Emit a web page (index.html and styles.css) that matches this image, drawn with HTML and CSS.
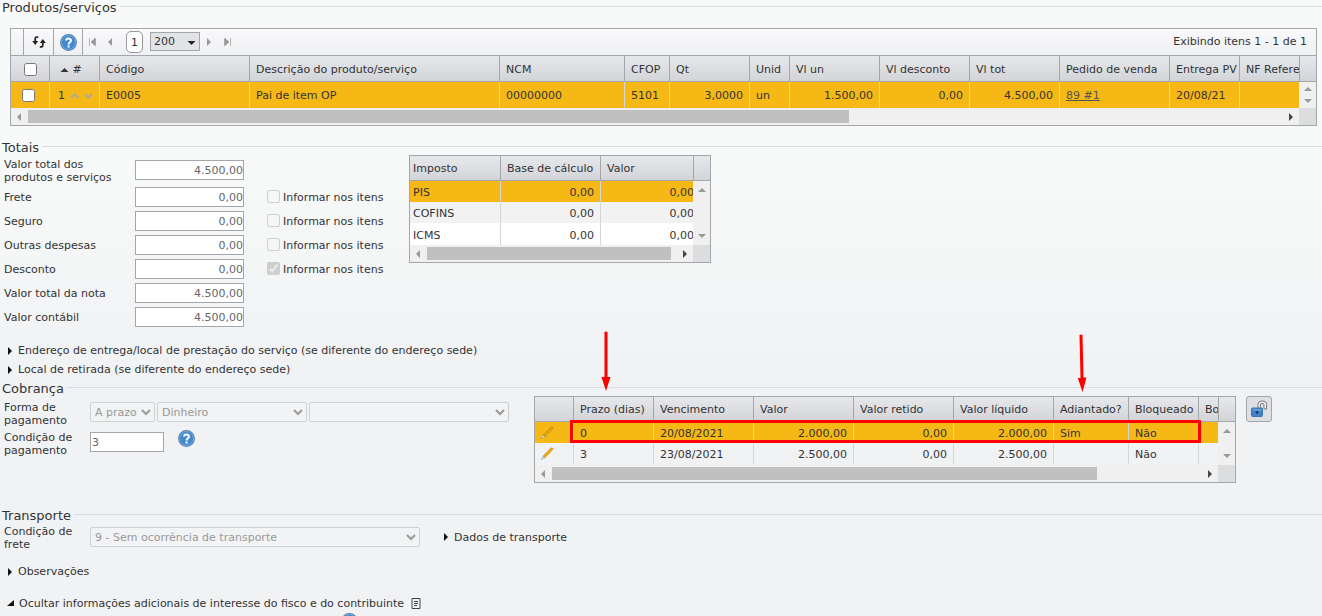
FILE: index.html
```html
<!DOCTYPE html>
<html lang="pt-BR">
<head>
<meta charset="utf-8">
<title>Nota fiscal</title>
<link rel="stylesheet" href="styles.css">
</head>
<body>
<svg class="defs" aria-hidden="true">
  <symbol id="help" viewBox="0 0 16 16"><circle cx="8" cy="8" r="7.4" fill="#4389cf" stroke="#5580ad" stroke-width="1"/><circle cx="8" cy="8" r="6.6" fill="none" stroke="#8fbce6" stroke-width=".6"/><path d="M5.7 6.2C5.8 3.5 10.4 3.5 10.3 6.2C10.2 7.8 8.1 7.8 8.1 9.8" fill="none" stroke="#fff" stroke-width="1.9"/><rect x="7.1" y="10.8" width="2" height="1.9" fill="#fff"/></symbol>
  <symbol id="pencil" viewBox="0 0 14 14"><path d="M3 9.2L10.8 1.1Q12.6.2 13 2.2L5 10.8Z" fill="#f0ad15" stroke="#bd8412" stroke-width=".6"/><path d="M3 9.2L5 10.8L1 12.8Z" fill="#ddd" stroke="#999" stroke-width=".5"/></symbol>
  <symbol id="pencil-off" viewBox="0 0 14 14"><path d="M3 9.2L10.8 1.1Q12.6.2 13 2.2L5 10.8ZM4 10L12 1.5" fill="none" stroke="#a97408" stroke-width=".8" stroke-dasharray="1.5 .6"/><path d="M3 9.2L5 10.8L1 12.8Z" fill="#ddd" stroke="#999" stroke-width=".5"/></symbol>
  <symbol id="right" viewBox="0 0 6 8"><path d="M1 0L5 4L1 8Z" fill="currentColor"/></symbol>
  <symbol id="left" viewBox="0 0 6 8"><path d="M5 0L1 4L5 8Z" fill="currentColor"/></symbol>
  <symbol id="up" viewBox="0 0 8 6"><path d="M0 5L4 1L8 5Z" fill="currentColor"/></symbol>
  <symbol id="down" viewBox="0 0 8 6"><path d="M0 1L4 5L8 1Z" fill="currentColor"/></symbol>
</svg>
<main>
<section class="products">
  <h2>Produtos/serviços</h2>
  <div class="frame">
    <div class="toolbar">
      <span class="tool-gap"></span>
      <button class="tool" aria-label="Atualizar"><svg width="16" height="14" viewBox="0 0 16 14"><path d="M7.200 2.200Q4.200 1.600 4.200 4V8M8.800 11.800Q11.800 12.400 11.800 10V6" fill="none" stroke="#222" stroke-width="1.800"/><path d="M1.200 6H7.200L4.200 10ZM8.800 8H14.800L11.800 4Z" fill="#222"/></svg></button>
      <button class="tool" aria-label="Ajuda"><svg width="17" height="17"><use href="#help"/></svg></button>
      <button class="nav" aria-label="Primeira"><svg width="7" height="8" viewBox="0 0 7 8"><path d="M.5 0V8M6.500 0V8L2 4Z" fill="#999" stroke="#999" stroke-width=".7"/></svg></button>
      <button class="nav" aria-label="Anterior"><svg width="6" height="8"><use href="#left"/></svg></button>
      <button class="page">1</button>
      <span class="size"><select aria-label="Itens por página"><option>200</option></select><svg width="9" height="6"><use href="#down"/></svg></span>
      <button class="nav" aria-label="Próxima"><svg width="6" height="8"><use href="#right"/></svg></button>
      <button class="nav last" aria-label="Última"><svg width="7" height="8" viewBox="0 0 7 8"><path d="M6.500 0V8M.5 0V8L5 4Z" fill="#999" stroke="#999" stroke-width=".7"/></svg></button>
      <span class="count">Exibindo itens 1 - 1 de 1</span>
    </div>
    <div class="grid">
      <div class="view">
        <table>
          <colgroup><col class="w39"><col class="w50"><col class="w150"><col class="w250"><col class="w125"><col class="w45"><col class="w80"><col class="w40"><col class="w90"><col class="w90"><col class="w90"><col class="w110"><col class="w70"><col class="w100"></colgroup>
          <thead><tr><th class="mid"><input type="checkbox" aria-label="Selecionar todos"></th><th class="sorted"><svg width="9" height="6"><use href="#up"/></svg> #</th><th>Código</th><th>Descrição do produto/serviço</th><th>NCM</th><th>CFOP</th><th>Qt</th><th>Unid</th><th>Vl un</th><th>Vl desconto</th><th>Vl tot</th><th>Pedido de venda</th><th class="tight">Entrega PV</th><th>NF Refere</th></tr></thead>
          <tbody><tr class="on tall"><td class="first"><input type="checkbox" aria-label="Selecionar item 1"></td><td>1 <svg class="moves" width="23" height="6" viewBox="0 0 23 6"><path d="M1 5L4.500 1.500L8 5M15 1L18.500 4.500L22 1" fill="none" stroke="#a9a9a6" stroke-width="2"/></svg></td><td>E0005</td><td>Pai de item OP</td><td>00000000</td><td>5101</td><td class="num">3,0000</td><td>un</td><td class="num">1.500,00</td><td class="num">0,00</td><td class="num">4.500,00</td><td><a href="#">89 #1</a></td><td>20/08/21</td><td></td></tr></tbody>
        </table>
      </div>
      <div class="corner"></div>
      <div class="vbar"><svg width="8" height="6"><use href="#up"/></svg><svg width="8" height="6"><use href="#down"/></svg></div>
      <div class="hbar"><svg width="6" height="8"><use href="#left"/></svg><span class="track"><span class="thumb" style="width:65.5%"></span></span><svg class="go" width="6" height="8"><use href="#right"/></svg></div>
      <div class="end"></div>
    </div>
  </div>
</section>

<section class="totals">
  <h2>Totais</h2>
  <div class="cols">
    <div class="fields">
      <div class="row two"><label for="t1">Valor total dos produtos e serviços</label><input id="t1" class="box" value="4.500,00"></div>
      <div class="row"><label for="t2">Frete</label><input id="t2" class="box" value="0,00"><label class="check"><input type="checkbox" disabled><span>Informar nos itens</span></label></div>
      <div class="row"><label for="t3">Seguro</label><input id="t3" class="box" value="0,00"><label class="check"><input type="checkbox" disabled><span>Informar nos itens</span></label></div>
      <div class="row"><label for="t4">Outras despesas</label><input id="t4" class="box" value="0,00"><label class="check"><input type="checkbox" disabled><span>Informar nos itens</span></label></div>
      <div class="row"><label for="t5">Desconto</label><input id="t5" class="box" value="0,00"><label class="check"><input type="checkbox" disabled checked><span>Informar nos itens</span></label></div>
      <div class="row"><label for="t6">Valor total da nota</label><input id="t6" class="box" value="4.500,00"></div>
      <div class="row"><label for="t7">Valor contábil</label><input id="t7" class="box" value="4.500,00"></div>
    </div>
    <div class="frame taxes">
      <div class="grid">
        <div class="view">
          <table>
            <colgroup><col class="w91"><col class="w100"><col class="w100"></colgroup>
            <thead><tr><th>Imposto</th><th>Base de cálculo</th><th>Valor</th></tr></thead>
            <tbody>
              <tr class="on"><td>PIS</td><td class="num">0,00</td><td class="num">0,00</td></tr>
              <tr class="alt"><td>COFINS</td><td class="num">0,00</td><td class="num">0,00</td></tr>
              <tr class="plain"><td>ICMS</td><td class="num">0,00</td><td class="num">0,00</td></tr>
            </tbody>
          </table>
        </div>
        <div class="corner"></div>
        <div class="vbar"><svg width="8" height="6"><use href="#up"/></svg><svg width="8" height="6"><use href="#down"/></svg></div>
        <div class="hbar"><svg width="6" height="8"><use href="#left"/></svg><span class="track"><span class="thumb" style="width:98%"></span></span><svg class="go" width="6" height="8"><use href="#right"/></svg></div>
        <div class="end"></div>
      </div>
    </div>
  </div>
  <div class="links">
    <button class="toggle"><svg width="6" height="8"><use href="#right"/></svg>Endereço de entrega/local de prestação do serviço (se diferente do endereço sede)</button>
    <button class="toggle"><svg width="6" height="8"><use href="#right"/></svg>Local de retirada (se diferente do endereço sede)</button>
  </div>
</section>

<section class="billing">
  <h2>Cobrança</h2>
  <div class="cols">
    <div class="fields narrow">
      <div class="row two"><label for="c1">Forma de pagamento</label><div class="group">
        <span class="pick short"><select id="c1" disabled><option>A prazo</option></select><svg width="10" height="7" viewBox="0 0 10 7"><path d="M1 1L5 5L9 1"/></svg></span>
        <span class="pick medium"><select aria-label="Meio de pagamento" disabled><option>Dinheiro</option></select><svg width="10" height="7" viewBox="0 0 10 7"><path d="M1 1L5 5L9 1"/></svg></span>
        <span class="pick long"><select aria-label="Conta" disabled><option></option></select><svg width="10" height="7" viewBox="0 0 10 7"><path d="M1 1L5 5L9 1"/></svg></span></div></div>
      <div class="row two"><label for="c2">Condição de pagamento</label><input id="c2" class="box terms" value="3"><button class="help" aria-label="Ajuda"><svg width="17" height="17"><use href="#help"/></svg></button></div>
    </div>
    <div class="installments">
      <div class="frame">
        <div class="grid">
          <div class="view">
            <table>
              <colgroup><col class="w39"><col class="w80"><col class="w100"><col class="w100"><col class="w100"><col class="w100"><col class="w75"><col class="w70"><col class="w70"></colgroup>
              <thead><tr><th></th><th>Prazo (dias)</th><th>Vencimento</th><th>Valor</th><th>Valor retido</th><th>Valor líquido</th><th>Adiantado?</th><th>Bloqueado</th><th>Bo</th></tr></thead>
              <tbody>
                <tr class="on"><td class="edit"><svg width="14" height="14"><use href="#pencil-off"/></svg></td><td>0</td><td>20/08/2021</td><td class="num">2.000,00</td><td class="num">0,00</td><td class="num">2.000,00</td><td>Sim</td><td>Não</td><td></td></tr>
                <tr><td class="edit"><svg width="14" height="14"><use href="#pencil"/></svg></td><td>3</td><td>23/08/2021</td><td class="num">2.500,00</td><td class="num">0,00</td><td class="num">2.500,00</td><td></td><td>Não</td><td></td></tr>
              </tbody>
            </table>
          </div>
          <div class="corner"></div>
          <div class="vbar"><svg width="8" height="6"><use href="#up"/></svg><svg width="8" height="6"><use href="#down"/></svg></div>
          <div class="hbar"><svg width="6" height="8"><use href="#left"/></svg><span class="track"><span class="thumb" style="width:84%"></span></span><svg class="go" width="6" height="8"><use href="#right"/></svg></div>
          <div class="end"></div>
        </div>
      </div>
      <div class="mark"></div>
      <svg class="arrow term" width="10" height="60" viewBox="0 0 10 60"><path d="M3.500 1Q5 0 6.500 1V46H9.500L5 60L.5 46H3.500Z" fill="#f00"/></svg>
      <svg class="arrow advance" width="10" height="58" viewBox="0 0 10 58"><path d="M2.500 1Q4 0 5.500 1L6.500 43.500H9.500L5.500 58L.8 44H3.500Z" fill="#f00"/></svg>
    </div>
    <button class="lock" aria-label="Desbloquear"><svg width="18" height="18" viewBox="0 0 18 18"><path d="M8 9V4.500Q8 1 12 1Q16.500 1 16.500 4.500V9H14V5Q14 3.300 12.200 3.300Q10.400 3.300 10.400 5V9" fill="#f4f4f4" stroke="#777" stroke-width="1"/><rect x="1.500" y="8" width="11" height="8.500" rx="1" fill="#4284c5" stroke="#3a78b4"/><path d="M3 10H11" stroke="#82b3df"/><path d="M7 11V14M5.500 12H8.500" stroke="#173f68" stroke-width="1.500"/></svg></button>
  </div>
</section>

<section class="shipping">
  <h2>Transporte</h2>
  <div class="fields narrow">
    <div class="row two"><label for="s1">Condição de frete</label><span class="pick full"><select id="s1" disabled><option>9 - Sem ocorrência de transporte</option></select><svg width="10" height="7" viewBox="0 0 10 7"><path d="M1 1L5 5L9 1"/></svg></span><button class="toggle data"><svg width="6" height="8"><use href="#right"/></svg>Dados de transporte</button></div>
  </div>
  <div class="notes">
    <button class="toggle">
      <svg width="6" height="8"><use href="#right"/></svg>Observações</button>
    <button class="toggle"><svg width="7" height="7" viewBox="0 0 7 7"><path d="M7 0V6H0Z" fill="currentColor"/></svg>Ocultar informações adicionais de interesse do fisco e do contribuinte<svg class="doc" width="10" height="11" viewBox="0 0 10 11"><path d="M1 .5H9V10.500H1ZM3 3.500H7M3 5.500H7M3 7.500H6" fill="none" stroke="#444"/></svg></button>
  </div>
  <button class="help more" aria-label="Ajuda"><svg width="17" height="17"><use href="#help"/></svg></button>
</section>
</main>
</body>
</html>
```
FILE: styles.css
```css
* { box-sizing: border-box; }
html { height: 100%; overflow: hidden; }
body {
  margin: 0;
  height: 100%;
  overflow: hidden;
  font: 11px/13px Verdana, "DejaVu Sans", sans-serif;
  color: #333;
  background: linear-gradient(#f8faf9 0, #f8faf9 150px, #f1f2f4 370px);
}
.defs { position: absolute; width: 0; height: 0; }
svg { flex: none; }
button, input, select { font: inherit; color: inherit; margin: 0; }
button { padding: 0; border: 0; background: none; display: flex; align-items: center; justify-content: center; }
h2 {
  display: flex;
  gap: 3px;
  margin: 0;
  padding-left: 2px;
  font-size: 13px;
  font-weight: normal;
  line-height: 15px;
}
h2::after { content: ""; flex: 1; height: 1px; margin-top: 6px; background: #dadcdd; }
.frame { border: 1px solid #a3a6aa; }

.products .frame { margin: 13px 5px 0 10px; }
.toolbar {
  display: flex;
  align-items: center;
  height: 27px;
  border-bottom: 1px solid #a3a6aa;
  background: linear-gradient(#f9f9fb, #eff0f3);
}
.tool-gap { width: 13px; align-self: stretch; border-right: 1px solid #a3a6aa; }
.tool { width: 30px; align-self: stretch; border-right: 1px solid #a3a6aa; }
.tool + .tool { width: 29px; }
.nav { width: 18px; height: 20px; color: #999; }
.page { width: 17px; height: 22px; margin: 0 7px; border: 1px solid #999; border-radius: 5px; background: #fff; }
.size { position: relative; width: 50px; height: 19px; margin-bottom: 2px; }
.size select { appearance: none; width: 100%; height: 100%; padding: 0 3px; border: 1px solid #a3a6aa; border-radius: 0; background: #e2e3e6; }
.size svg { position: absolute; right: 4px; top: 8px; color: #222; }
.count { margin-left: auto; padding: 0 9px 2px 0; }

.grid { display: grid; grid-template-columns: minmax(0, 1fr) 17px; grid-template-rows: auto 1fr 17px; }
.view { grid-row: 1 / 3; overflow: hidden; }
.corner { grid-column: 2; grid-row: 1; height: 25px; border-left: 1px solid #a3a6aa; border-bottom: 1px solid #a3a6aa; background: linear-gradient(#e7e8eb, #d2d4d8); }
.products .corner, .products th { height: 26px; }
.vbar { grid-column: 2; grid-row: 2; display: flex; flex-direction: column; align-items: center; justify-content: space-between; padding: 6px 0; background: #f0f0f0; color: #999; }
.products .vbar { padding: 4px 0; }
.hbar { display: flex; align-items: center; gap: 6px; padding: 0 5px; background: #f0f0f0; color: #999; }
.go { color: #444; }
.track { flex: 1; height: 13px; }
.thumb { display: block; height: 100%; background: #c0c0c0; }
.end { background: #dcdddf; }
table { width: 0; table-layout: fixed; border-spacing: 0; }
th { height: 25px; padding: 0 0 0 6px; border-right: 1px solid #a3a6aa; border-bottom: 1px solid #a3a6aa; background: linear-gradient(#e7e8eb, #d2d4d8); font-weight: normal; text-align: left; white-space: nowrap; overflow: hidden; }
.products th { padding-top: 1px; }
td { height: 21px; padding: 2px 6px 0; border-right: 1px solid #d5d6d8; white-space: nowrap; overflow: hidden; }
.num { text-align: right; }
.on td { background: #f5b815; }
.tall td { height: 26px; padding-top: 0; }
.alt td { background: #f2f2f3; }
.plain td { height: 22px; background: #fff; }
.mid { padding: 0; }
.sorted { padding-left: 10px; }
td.first { padding: 0 0 0 11px; }
.first input, .mid input { width: 13px; height: 13px; display: block; }
.mid input { margin: 0 auto; }
.moves { margin-left: 1px; }
.products td:nth-child(2) { padding-right: 0; padding-left: 8px; }
.taxes th:first-child, .taxes td:first-child { padding-left: 3px; }
.edit { padding: 0 5px; }
.edit svg { display: block; }
a { color: #555; }
.w39 { width: 39px; } .w40 { width: 40px; } .w45 { width: 45px; } .w50 { width: 50px; }
.w70 { width: 70px; } .w75 { width: 75px; } .w80 { width: 80px; } .w90 { width: 90px; }
.w91 { width: 91px; } .w100 { width: 100px; } .w110 { width: 110px; } .w125 { width: 125px; }
.w150 { width: 150px; } .w250 { width: 250px; }

.totals { padding-top: 14px; }
.cols { display: flex; align-items: flex-start; }
.fields { flex: none; width: 409px; }
.row { display: grid; grid-template-columns: 131px 109px 1fr; align-items: center; height: 24px; padding-left: 4px; }
.row.two { height: 30px; }
.row > label:first-child { padding-right: 20px; }
.totals .two > label:first-child { padding-top: 2px; }
.box { width: 100%; height: 20px; padding: 0 0 0 1px; border: 1px solid #a3a6aa; background: #fff; color: #666; text-align: right; }
.check { display: flex; gap: 3px; padding-left: 23px; }
.check input { width: 13px; height: 13px; }
.check span { padding-top: 1px; }
.taxes { width: 302px; }
.links { padding: 12px 0 2px 7px; }
.toggle { height: 19px; gap: 5px; white-space: nowrap; }
.toggle svg { color: #111; }

.billing .fields { width: 534px; padding-top: 1px; }
.narrow .row { display: flex; }
.narrow .row > label:first-child { flex: none; width: 86px; padding: 0 10px 0 0; }
.billing .row > label:first-child { padding-top: 4px; }
.group { display: flex; gap: 2px; }
.pick { position: relative; flex: none; height: 20px; }
.pick select { appearance: none; display: block; width: 100%; height: 100%; padding: 0 4px; border: 1px solid #cfd0d2; border-radius: 2px; background: #f2f3f4; color: #999; opacity: 1; }
.pick svg { position: absolute; right: 4px; top: 7px; fill: none; stroke: #999; stroke-width: 2; }
.short { width: 65px; }
.medium { width: 150px; }
.long { width: 200px; }
.full { width: 330px; }
.terms { width: 74px; text-align: left; }
.help { margin-left: 14px; }
.narrow .help { margin-bottom: 7px; }
.installments { position: relative; flex: none; width: 702px; }
.installments .vbar { min-height: 43px; }
.mark { position: absolute; left: 36px; top: 24px; width: 631px; height: 23px; border: 3px solid #f00; }
.arrow { position: absolute; }
.term { left: 67px; top: -65px; }
.advance { left: 543px; top: -62px; }
.lock { width: 26px; height: 26px; margin-left: 10px; border: 1px solid #a3a6aa; border-radius: 3px; background: #dedfe2; }

.shipping { padding-top: 25px; }
.shipping .fields { width: auto; }
.shipping .pick { margin-bottom: 2px; }
.data { margin: 0 0 2px 23px; }
.notes { display: grid; justify-items: start; gap: 13px; padding: 9px 0 0 7px; }
.doc { margin-left: 2px; }
.more { margin-left: 341px; }
```
